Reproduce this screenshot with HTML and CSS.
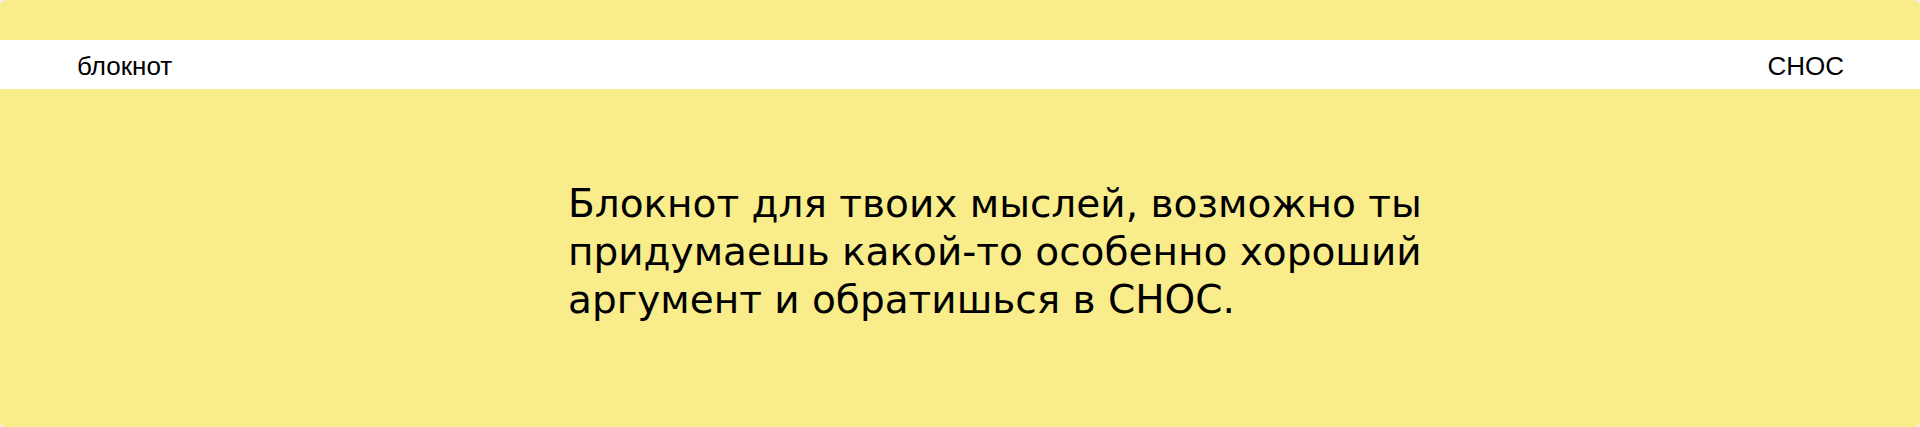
FILE: index.html
```html
<!DOCTYPE html>
<html lang="ru">

<head>
    <meta charset="UTF-8">
    <title>Блокнот</title>
    <link rel="stylesheet" href="styles.css">
</head>

<body>

    <div class="page">
        <header class="topbar">
            <span class="brand">блокнот</span>
            <span class="brand">СНОС</span>
        </header>

        <main class="content">
            <p class="lead">Блокнот для твоих мыслей, возможно ты<br>
                придумаешь какой-то особенно хороший<br>
                аргумент и обратишься в СНОС.</p>
        </main>
    </div>

</body>

</html>
```

FILE: styles.css
```css
body {
    margin: 0;
    background-color: #f2f2f2;
    font-family: 'DejaVu Sans', Verdana, sans-serif;
    color: #000;
}

.page {
    height: 427px;
    background-color: #F8EC8B;
    border-radius: 6px;
    padding-top: 40px;
    box-sizing: border-box;
    overflow: hidden;
}

.topbar {
    height: 49px;
    background-color: #fff;
    display: flex;
    justify-content: space-between;
    align-items: center;
    padding: 0 76px 0 77px;
}

.brand {
    font-family: 'Liberation Sans', Arial, sans-serif;
    font-size: 26px;
    line-height: 1;
    padding-top: 2px;
}

.content {
    padding-left: 568px;
}

.lead {
    margin: 91px 0 0;
    font-size: 39px;
    line-height: 48px;
}
```
